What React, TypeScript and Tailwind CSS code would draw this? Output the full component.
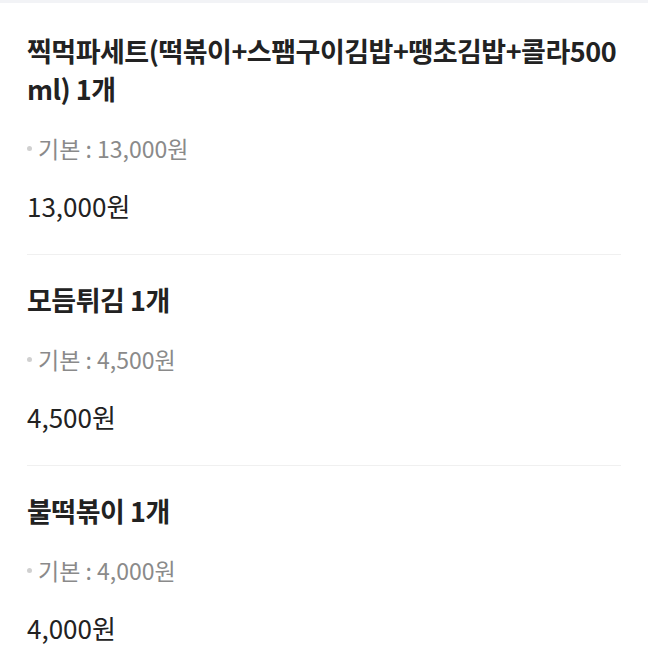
import React from "react";

type Item = { name: string; base: string; price: string };

const items: Item[] = [
  {
    name: "찍먹파세트(떡볶이+스팸구이김밥+땡초김밥+콜라500ml) 1개",
    base: "13,000원",
    price: "13,000원",
  },
  { name: "모듬튀김 1개", base: "4,500원", price: "4,500원" },
  { name: "불떡볶이 1개", base: "4,000원", price: "4,000원" },
];

const font = { fontFamily: '"Noto Sans CJK KR", "Noto Sans", sans-serif' };

export default function App() {
  return (
    <div className="min-h-[658px] w-[648px] bg-white" style={font}>
      <div className="h-[3px] bg-[#f2f3f6]" />
      <div className="px-[27px] pt-[3px]">
        {items.map((item, i) => (
          <div
            key={i}
            className={`pt-[26px] pb-[32px] ${i < items.length - 1 ? "border-b border-[#f0f0f0]" : ""}`}
          >
            <h3 className="text-[27px] font-bold leading-[38px] tracking-[-0.5px] text-[#222] break-all">
              {item.name}
            </h3>
            <div className="mt-[25px] flex items-center text-[23px] leading-[30px] text-[#8a8a8a]">
              <span className="mr-[6px] h-[5px] w-[5px] rounded-full bg-[#d0d0d0]" />
              <span>기본 : {item.base}</span>
            </div>
            <div className="mt-[27px] text-[26px] leading-[32px] text-[#222]">
              {item.price}
            </div>
          </div>
        ))}
      </div>
    </div>
  );
}
